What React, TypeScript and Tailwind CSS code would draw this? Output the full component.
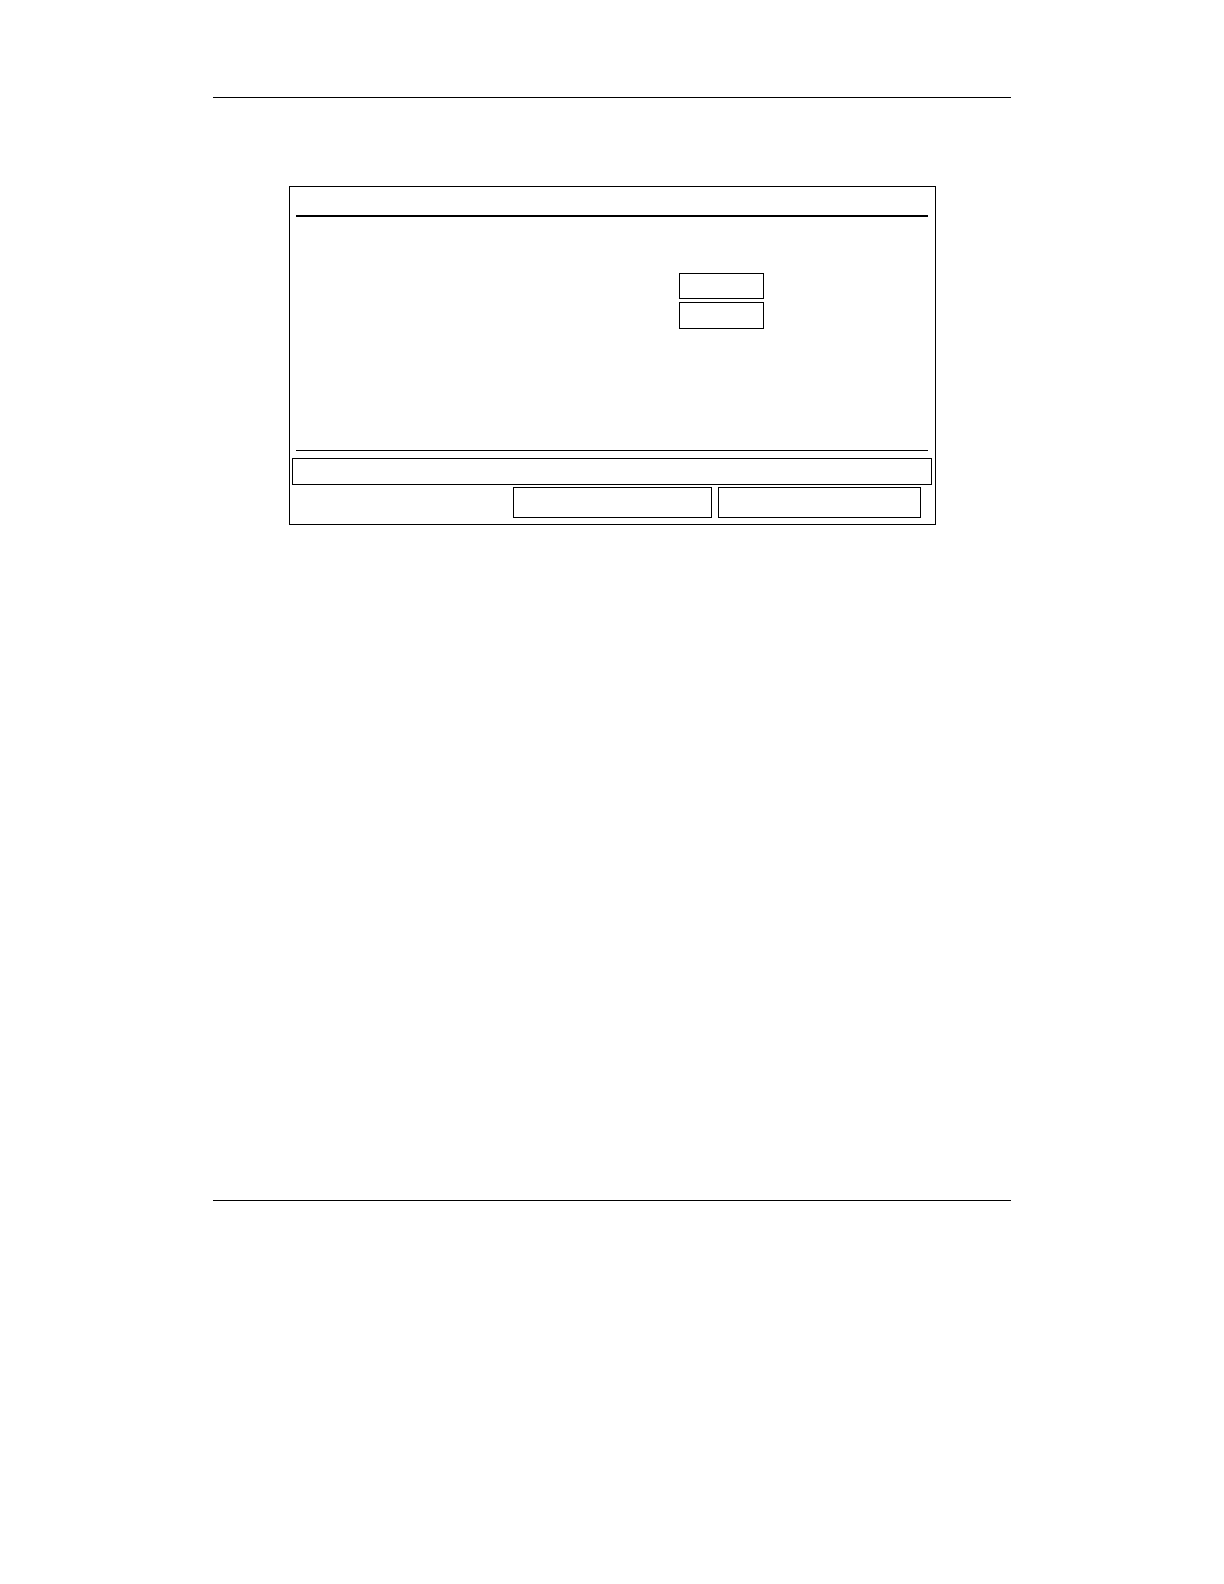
import React from "react";

const fields = [
  { id: "first", label: "First value", height: "h-[26px]" },
  { id: "second", label: "Second value", height: "h-[27px]" },
];

const DisplayPanel: React.FC = () => {
  return (
    <form className="ml-[76px] mr-[75px] border border-black">
      <header className="h-7" />
      <hr className="mr-[7px] ml-[6px] border-t-2 border-black" />

      <div className="flex flex-col items-start gap-[3px] pt-14 pb-[121px] pl-[389px]">
        {fields.map((field) => (
          <input
            key={field.id}
            id={field.id}
            type="text"
            aria-label={field.label}
            className={`block w-[85px] border border-black bg-white px-1 font-['Liberation_Sans',sans-serif] text-sm ${field.height}`}
          />
        ))}
      </div>

      <hr className="mr-[7px] ml-[6px] border-t border-black" />
      <output
        aria-label="Message"
        className="mt-[7px] mr-[3px] ml-[2px] block h-[27px] border border-black"
      />

      <div className="mt-[2px] mr-[14px] mb-[6px] flex justify-end gap-[6px]">
        <button
          type="button"
          aria-label="Left key"
          className="h-[31px] w-[199px] border border-black bg-white"
        />
        <button
          type="button"
          aria-label="Right key"
          className="h-[31px] w-[203px] border border-black bg-white"
        />
      </div>
    </form>
  );
};

const App: React.FC = () => {
  return (
    <div className="flex min-h-screen flex-col bg-white px-[213px]">
      <header className="h-[98px] border-b border-black" />
      <main className="flex-1 pt-[88px]">
        <DisplayPanel />
      </main>
      <footer className="h-96 border-t border-black" />
    </div>
  );
};

export default App;
